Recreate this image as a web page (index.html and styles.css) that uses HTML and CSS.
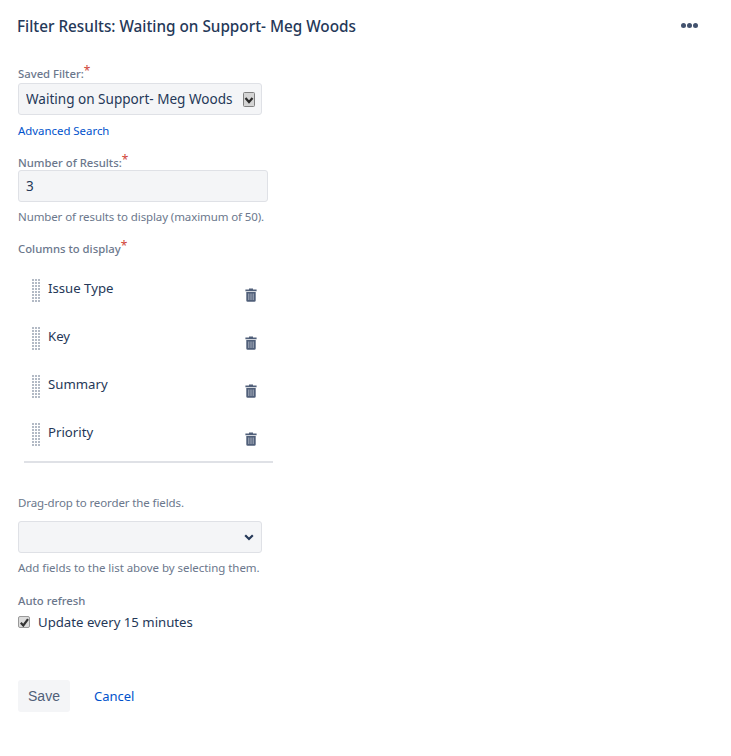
FILE: index.html
```html
<!DOCTYPE html>
<html lang="en">
<head>
<meta charset="utf-8">
<title>Filter Results</title>
<link rel="stylesheet" href="styles.css">
</head>
<body>
<main class="page">
  <header class="header">
    <h1 class="title">Filter Results: Waiting on Support- Meg Woods</h1>
    <button class="more" type="button" aria-label="More"><span></span><span></span><span></span></button>
  </header>
  <form class="form">
    <div class="field field-filter">
      <label class="label">Saved Filter:<sup class="req">*</sup></label>
      <div class="select-wrap">
        <select class="select"><option>Waiting on Support- Meg Woods</option></select>
        <svg class="old-arrow" width="12" height="15" viewBox="0 0 12 15"><rect x="0.5" y="0.5" width="11" height="14" rx="1" fill="#d4d4d4" stroke="#808080"/><path d="M2.500 6 6 10 9.500 6" fill="none" stroke="#2a2a2a" stroke-width="2.200"/></svg>
      </div>
      <a class="link adv" href="#">Advanced Search</a>
    </div>
    <div class="field field-num">
      <label class="label">Number of Results:<sup class="req">*</sup></label>
      <input class="input" type="text" value="3">
      <p class="help help-num">Number of results to display (maximum of 50).</p>
    </div>
    <div class="field field-cols">
      <label class="label">Columns to display<sup class="req">*</sup></label>
      <ul class="cols">
        <li class="col"><span class="grip"></span><span class="col-name">Issue Type</span><svg class="trash" width="12" height="14" viewBox="0 0 12 14"><path class="tr" d="M4 1.600V.6h4v1h3.600v1.600H.4V1.600ZM1.300 4h9.400v8.400a1.400 1.400 0 0 1-1.400 1.400H2.700a1.400 1.400 0 0 1-1.400-1.400Z"/><path class="tl" d="M3.800 5.500v6.500M6 5.500v6.500M8.200 5.500v6.500"/></svg></li>
        <li class="col"><span class="grip"></span><span class="col-name">Key</span><svg class="trash" width="12" height="14" viewBox="0 0 12 14"><path class="tr" d="M4 1.600V.6h4v1h3.600v1.600H.4V1.600ZM1.300 4h9.400v8.400a1.400 1.400 0 0 1-1.400 1.400H2.700a1.400 1.400 0 0 1-1.400-1.400Z"/><path class="tl" d="M3.800 5.500v6.500M6 5.500v6.500M8.200 5.500v6.500"/></svg></li>
        <li class="col"><span class="grip"></span><span class="col-name">Summary</span><svg class="trash" width="12" height="14" viewBox="0 0 12 14"><path class="tr" d="M4 1.600V.6h4v1h3.600v1.600H.4V1.600ZM1.300 4h9.400v8.400a1.400 1.400 0 0 1-1.400 1.400H2.700a1.400 1.400 0 0 1-1.400-1.400Z"/><path class="tl" d="M3.800 5.500v6.500M6 5.500v6.500M8.200 5.500v6.500"/></svg></li>
        <li class="col"><span class="grip"></span><span class="col-name">Priority</span><svg class="trash" width="12" height="14" viewBox="0 0 12 14"><path class="tr" d="M4 1.600V.6h4v1h3.600v1.600H.4V1.600ZM1.300 4h9.400v8.400a1.400 1.400 0 0 1-1.400 1.400H2.700a1.400 1.400 0 0 1-1.400-1.400Z"/><path class="tl" d="M3.800 5.500v6.500M6 5.500v6.500M8.200 5.500v6.500"/></svg></li>
      </ul>
      <p class="help help-drag">Drag-drop to reorder the fields.</p>
      <div class="select-wrap">
        <select class="select"><option></option></select>
        <svg class="chev" width="10" height="7" viewBox="0 0 10 7"><path d="M1.200 1.300 5 5 8.800 1.300" fill="none" stroke="#253858" stroke-width="2.200"/></svg>
      </div>
      <p class="help help-add">Add fields to the list above by selecting them.</p>
    </div>
    <div class="field field-auto">
      <label class="label">Auto refresh</label>
      <label class="check">
        <span class="box"><svg width="13" height="13" viewBox="0 0 13 13"><path d="M2.800 6.800 5.300 9.500 10 3.200" fill="none" stroke="#333" stroke-width="2.200"/></svg></span>
        <input class="cb" type="checkbox" checked>
        <span class="check-text">Update every 15 minutes</span>
      </label>
    </div>
    <div class="actions">
      <button class="save" type="button">Save</button>
      <a class="link cancel" href="#">Cancel</a>
    </div>
  </form>
</main>
</body>
</html>
```
FILE: styles.css
```css
* { box-sizing: border-box; }
html, body { margin: 0; padding: 0; background: #fff; }
body { font-family: "Noto Sans", "Open Sans", sans-serif; color: #172b4d; font-size: 14px; }
.page { width: 731px; height: 756px; padding: 0 18px; overflow: hidden; }
.header { display: flex; justify-content: space-between; align-items: center; height: 54px; padding-right: 15px; }
.title { margin: 0 0 2px -1px; font-size: 15.3px; line-height: 20px; font-weight: 500; color: #253858; }
.more { display: flex; gap: 1px; padding: 0; border: 0; background: none; margin-top: -3px; }
.more span { width: 5px; height: 5px; border-radius: 50%; background: #42526e; }
.form { display: block; }
.label { display: block; font-size: 11.3px; line-height: 16px; font-weight: 500; color: #6b778c; }
.req { color: #d04437; font-size: 12px; line-height: 0; vertical-align: 3px; font-weight: 400; }
.field-filter { padding-top: 12px; }
.select-wrap { position: relative; width: 244px; height: 32px; margin-top: 1px; }
.select { appearance: none; display: block; width: 100%; height: 32px; padding: 0 0 0 7px; border: 1px solid #dfe1e6; border-radius: 3px; background: #f4f5f7; color: #253858; font: 13.55px "Noto Sans", sans-serif; }
.old-arrow { position: absolute; left: 225px; top: 9px; }
.chev { position: absolute; left: 226px; top: 13px; }
.link { color: #0052cc; text-decoration: none; }
.adv { display: block; margin-top: 7px; font-size: 11.4px; line-height: 18px; }
.field-num { padding-top: 15px; }
.input { display: block; width: 250px; height: 32px; margin-top: -1px; padding: 0 7px; border: 1px solid #dfe1e6; border-radius: 3px; background: #f4f5f7; color: #253858; font: 13.5px "Noto Sans", sans-serif; }
.help { margin: 0; font-size: 11.5px; line-height: 16px; letter-spacing: -0.11px; color: #6b778c; }
.help-num { margin-top: 7px; }
.field-cols { padding-top: 16px; }
.cols { list-style: none; margin: 13px 0 0 6px; padding: 0; width: 249px; border-bottom: 2px solid #dfe1e6; }
.col { position: relative; display: flex; align-items: flex-start; height: 48px; padding: 6px 0 0 8px; }
.col:last-child { height: 47px; }
.grip { width: 9px; height: 24px; margin-top: 3px; background-image: radial-gradient(circle at 1px 1px, #b3bac5 1px, transparent 1px); background-size: 3px 3px; }
.col-name { margin-left: 7px; font-size: 13.2px; line-height: 24px; color: #253858; }
.trash { position: absolute; left: 221px; top: 18px; }
.tr { fill: #505f79; }
.tl { stroke: #aab2c0; stroke-width: 1; fill: none; }
.help-drag { margin-top: 32px; }
.field-cols .select-wrap { margin-top: 10px; }
.help-add { margin-top: 7px; letter-spacing: -0.05px; }
.field-auto { padding-top: 17px; }
.check { position: relative; display: flex; align-items: center; height: 20px; margin-top: 3px; }
.cb { appearance: none; width: 13px; height: 13px; margin: 0; border: 0; background: none; flex: none; position: relative; z-index: 1; }
.box { position: absolute; left: 0; top: 4px; width: 12px; height: 12px; border: 1px solid #999; border-radius: 2px; background: #dcdcdc; overflow: hidden; }
.box svg { display: block; margin: -1px 0 0 -1px; }
.check-text { margin-left: 7px; font-size: 13.2px; line-height: 20px; color: #253858; }
.actions { display: flex; align-items: center; gap: 24px; margin-top: 48px; }
.save { width: 52px; height: 32px; border: 0; border-radius: 3px; background: #f4f5f7; color: #505f79; font: 14px "Liberation Sans", Arial, sans-serif; padding: 0; }
.cancel { font-size: 13px; line-height: 20px; }
```
